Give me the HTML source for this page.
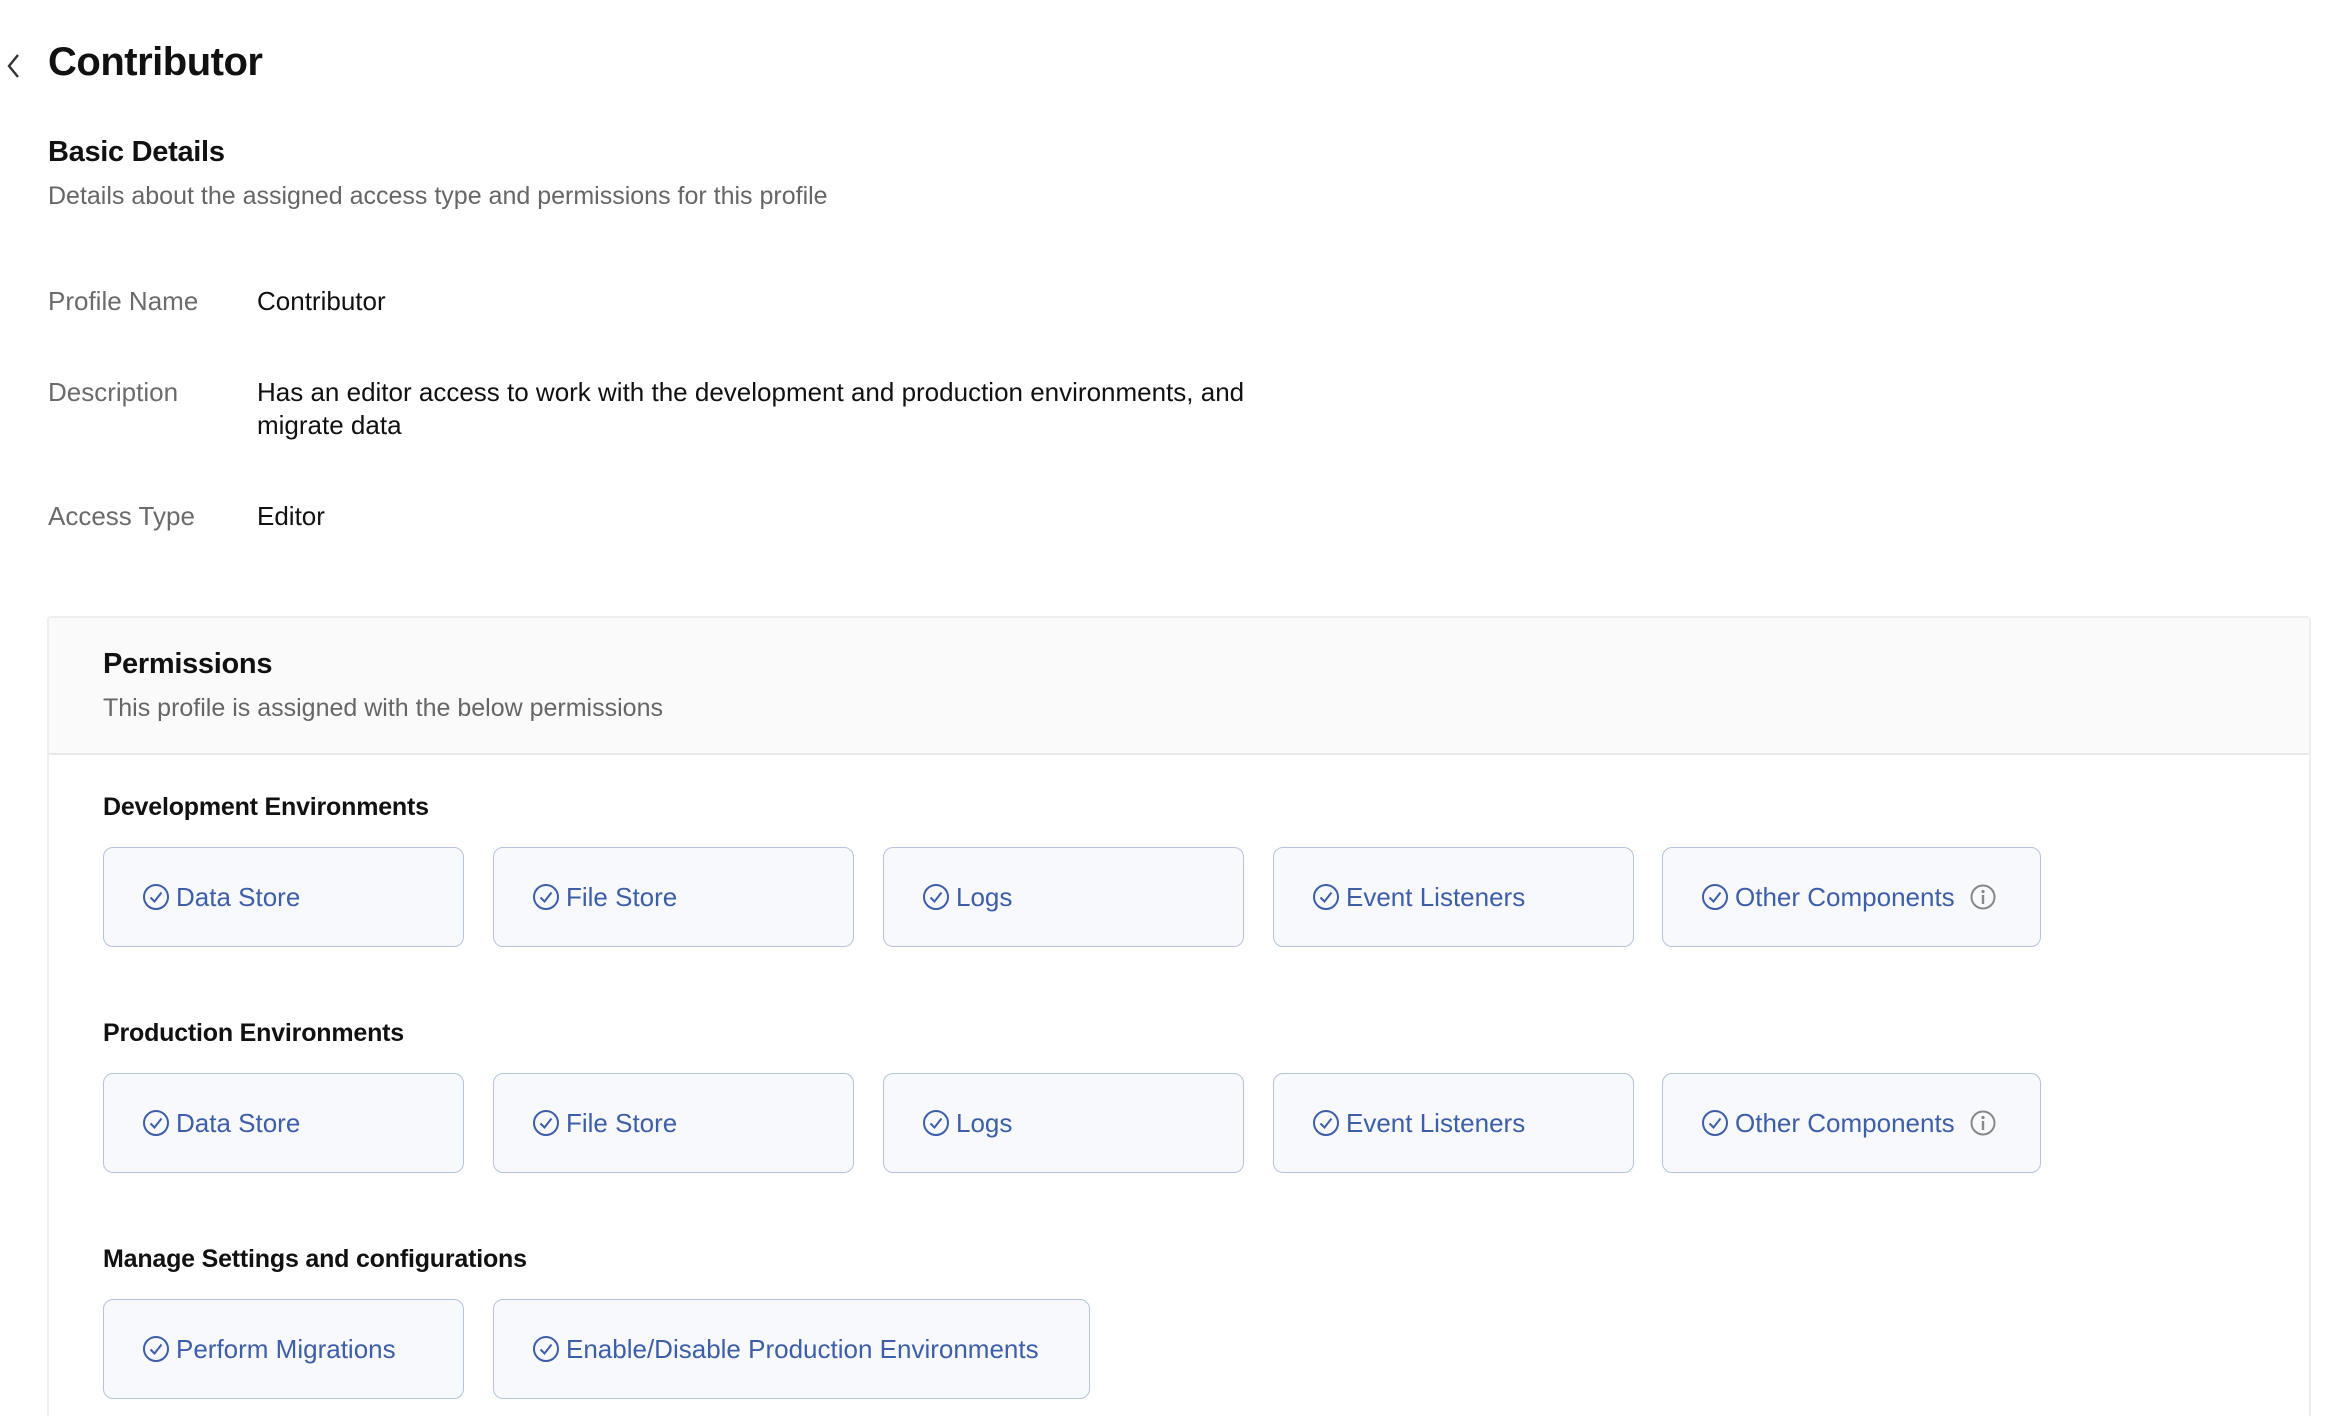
<!DOCTYPE html>
<html style="width:2346px;height:1416px;overflow:hidden"><head><meta charset="utf-8"><style>
*{box-sizing:border-box;margin:0;padding:0}
body{width:2346px;height:1416px;overflow:hidden;background:#fff;font-family:"Liberation Sans",sans-serif;color:#111;position:relative}
.abs{position:absolute;white-space:nowrap}
h1{position:absolute;left:48px;top:40px;font-size:40px;font-weight:bold;letter-spacing:-0.5px}
.h2{font-size:29px;font-weight:bold;letter-spacing:-0.3px}
.sub{font-size:25px;color:#666}
.lbl{font-size:26px;color:#6b6b6b}
.val{font-size:26px;color:#111}
.panel{position:absolute;left:47px;top:616px;width:2264px;height:840px;border:2px solid #eceef0;border-radius:4px;background:#fff}
.phead{position:absolute;left:0;top:0;right:0;height:137px;background:#fafafa;border-bottom:2px solid #e8e8e8}
.sec{font-size:25px;font-weight:bold;letter-spacing:-0.2px}
.card{position:absolute;height:100px;border:1.5px solid #b5c3dc;border-radius:10px;background:#f7f9fd;display:flex;align-items:center;padding-left:38px;font-size:26px;color:#3d5ea8}
.card svg{margin-right:6px;flex:none}
</style></head><body>
<svg class="abs" style="left:5px;top:52px" width="16" height="28" viewBox="0 0 16 28"><path d="M13 3 L4 14 L13 25" fill="none" stroke="#333" stroke-width="2.4"/></svg>
<h1>Contributor</h1>
<div class="abs h2" style="left:48px;top:136px">Basic Details</div>
<div class="abs sub" style="left:48px;top:182px">Details about the assigned access type and permissions for this profile</div>
<div class="abs lbl" style="left:48px;top:286px">Profile Name</div>
<div class="abs val" style="left:257px;top:286px">Contributor</div>
<div class="abs lbl" style="left:48px;top:377px">Description</div>
<div class="abs val" style="left:257px;top:376px;line-height:33px">Has an editor access to work with the development and production environments, and<br>migrate data</div>
<div class="abs lbl" style="left:48px;top:501px">Access Type</div>
<div class="abs val" style="left:257px;top:501px">Editor</div>

<div class="panel"><div class="phead"></div></div>
<div class="abs h2" style="left:103px;top:648px">Permissions</div>
<div class="abs sub" style="left:103px;top:694px">This profile is assigned with the below permissions</div>

<div class="abs sec" style="left:103px;top:793px">Development Environments</div>
<div class="abs sec" style="left:103px;top:1019px">Production Environments</div>
<div class="abs sec" style="left:103px;top:1245px">Manage Settings and configurations</div>

<svg width="0" height="0" style="position:absolute"><defs><symbol id="ck" viewBox="0 0 28 28"><circle cx="14" cy="14" r="12" fill="none" stroke="#3d5ea8" stroke-width="2"/><path d="M8.5 14.5 L12.5 18.5 L19.5 9.5" fill="none" stroke="#3d5ea8" stroke-width="2"/></symbol>
<symbol id="inf" viewBox="0 0 28 28"><circle cx="14" cy="14" r="11.5" fill="none" stroke="#888" stroke-width="2"/><circle cx="14" cy="8.5" r="1.6" fill="#888"/><rect x="12.8" y="12" width="2.4" height="9" fill="#888"/></symbol></defs></svg>

<div class="card" style="left:103px;top:847px;width:361px"><svg width="28" height="28"><use href="#ck"/></svg>Data Store</div>
<div class="card" style="left:493px;top:847px;width:361px"><svg width="28" height="28"><use href="#ck"/></svg>File Store</div>
<div class="card" style="left:883px;top:847px;width:361px"><svg width="28" height="28"><use href="#ck"/></svg>Logs</div>
<div class="card" style="left:1273px;top:847px;width:361px"><svg width="28" height="28"><use href="#ck"/></svg>Event Listeners</div>
<div class="card" style="left:1662px;top:847px;width:379px"><svg width="28" height="28"><use href="#ck"/></svg>Other Components<svg width="28" height="28" style="margin-left:14px"><use href="#inf"/></svg></div>

<div class="card" style="left:103px;top:1073px;width:361px"><svg width="28" height="28"><use href="#ck"/></svg>Data Store</div>
<div class="card" style="left:493px;top:1073px;width:361px"><svg width="28" height="28"><use href="#ck"/></svg>File Store</div>
<div class="card" style="left:883px;top:1073px;width:361px"><svg width="28" height="28"><use href="#ck"/></svg>Logs</div>
<div class="card" style="left:1273px;top:1073px;width:361px"><svg width="28" height="28"><use href="#ck"/></svg>Event Listeners</div>
<div class="card" style="left:1662px;top:1073px;width:379px"><svg width="28" height="28"><use href="#ck"/></svg>Other Components<svg width="28" height="28" style="margin-left:14px"><use href="#inf"/></svg></div>

<div class="card" style="left:103px;top:1299px;width:361px"><svg width="28" height="28"><use href="#ck"/></svg>Perform Migrations</div>
<div class="card" style="left:493px;top:1299px;width:597px"><svg width="28" height="28"><use href="#ck"/></svg>Enable/Disable Production Environments</div>
</body></html>
